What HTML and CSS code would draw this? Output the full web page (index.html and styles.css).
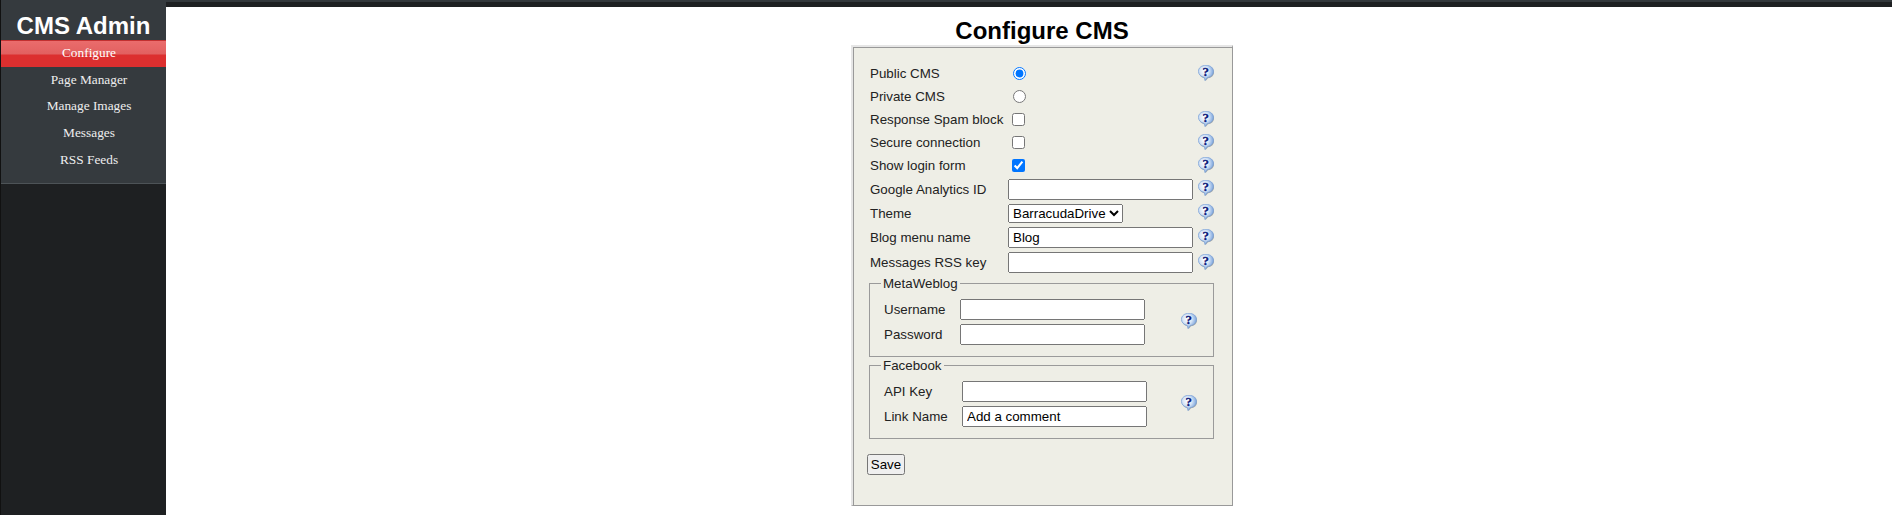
FILE: index.html
```html
<!DOCTYPE html>
<html>

<head>
	<meta charset="utf-8" />
	<title>CMS Admin</title>
	<link rel="stylesheet" href="styles.css">
</head>

<body>
	<svg class="defs" width="0" height="0">
		<defs>
			<radialGradient id="bub" cx="40%" cy="38%" r="65%">
				<stop offset="0" stop-color="#ffffff" />
				<stop offset="0.45" stop-color="#d8e6f7" />
				<stop offset="1" stop-color="#6d9ad8" />
			</radialGradient>
			<symbol id="help" viewBox="0 0 16 16">
				<path d="M8.600 1.300C13 1.300 16 3.900 16 7.200 16 10.500 13.300 12.900 10 13.200L7.500 16 6.900 13.200C3.500 12.600 1.200 10.300 1.200 7.200 1.200 3.900 4.200 1.300 8.600 1.300z" fill="#5d6a78" opacity=".55" />
				<path d="M8 .3C12.400 .3 15.500 2.900 15.500 6.300 15.500 9.700 12.800 12.200 9.300 12.500L7 15.600 6.200 12.400C2.800 11.800 .4 9.400 .4 6.300 .4 2.900 3.600 .3 8 .3z" fill="url(#bub)" stroke="#7ba2d8" stroke-width=".7" />
				<text x="7.800" y="10.600" class="qmark">?</text>
			</symbol>
		</defs>
	</svg>
	<div class="topbar"></div>
	<div class="page">
		<div class="side">
			<div class="menu">
				<h2>CMS Admin</h2>
				<a class="on" href="#">Configure</a>
				<a href="#">Page Manager</a>
				<a href="#">Manage Images</a>
				<a href="#">Messages</a>
				<a href="#">RSS Feeds</a>
			</div>
		</div>
		<div class="main">
			<h1>Configure CMS</h1>
			<form class="cfg">
				<div class="row"><label>Public CMS</label><span><input type="radio" name="pub" checked /></span><svg class="q"><use href="#help" /></svg></div>
				<div class="row"><label>Private CMS</label><span><input type="radio" name="pub" /></span></div>
				<div class="row"><label>Response Spam block</label><span><input type="checkbox" /></span><svg class="q"><use href="#help" /></svg></div>
				<div class="row"><label>Secure connection</label><span><input type="checkbox" /></span><svg class="q"><use href="#help" /></svg></div>
				<div class="row"><label>Show login form</label><span><input type="checkbox" checked /></span><svg class="q"><use href="#help" /></svg></div>
				<div class="row t"><label>Google Analytics ID</label><span><input class="txt" type="text" /></span><svg class="q"><use href="#help" /></svg></div>
				<div class="row t"><label>Theme</label><span><select><option>BarracudaDrive</option></select></span><svg class="q"><use href="#help" /></svg></div>
				<div class="row w"><label>Blog menu name</label><span><input class="txt" type="text" value="Blog" /></span><svg class="q"><use href="#help" /></svg></div>
				<div class="row w"><label>Messages RSS key</label><span><input class="txt" type="text" /></span><svg class="q"><use href="#help" /></svg></div>

				<fieldset class="meta">
					<legend>MetaWeblog</legend>
					<div class="pair">
						<div class="fields">
							<label>Username</label><input class="txt" type="text" />
							<label>Password</label><input class="txt" type="password" />
						</div>
						<svg class="q"><use href="#help" /></svg>
					</div>
				</fieldset>

				<fieldset class="fb">
					<legend>Facebook</legend>
					<div class="pair">
						<div class="fields">
							<label>API Key</label><input class="txt" type="text" />
							<label>Link Name</label><input class="txt" type="text" value="Add a comment" />
						</div>
						<svg class="q"><use href="#help" /></svg>
					</div>
				</fieldset>

				<button type="button">Save</button>
			</form>
		</div>
	</div>
</body>

</html>
```

FILE: styles.css
```css
html, body {
	margin:0;
	height:100%;
	overflow:hidden;
	background-color:#fff;
	font-family:"Liberation Sans", Arial, sans-serif;
	font-size:13.33px;
	color:#222;
}

.defs {
	display:block;
	height:0;
}

.qmark {
	font-family:"Liberation Serif", serif;
	font-weight:bold;
	font-size:13px;
	text-anchor:middle;
	fill:#0c1a78;
	stroke:#0c1a78;
	stroke-width:.3px;
}

.topbar {
	height:7px;
	background:linear-gradient(#33383c 0, #33383c 2px, #1e2022 2px);
}

.page {
	display:flex;
	margin-top:-7px;
	height:515px;
}

.side {
	width:165px;
	flex:none;
	background-color:#1e2022;
	border-left:1px solid #111;
}

.menu {
	height:184px;
	box-sizing:border-box;
	background-color:#353a3e;
	border-bottom:1px solid #4d5357;
}

.menu h2 {
	margin:0;
	padding-top:11px;
	height:29px;
	color:#fff;
	font-size:24px;
	line-height:29px;
	text-align:center;
}

.menu a {
	display:block;
	height:26.6px;
	padding-left:11px;
	line-height:26.6px;
	text-align:center;
	color:#eee;
	font-family:"Liberation Serif", serif;
	font-size:13.33px;
	text-decoration:none;
}

.menu a.on {
	height:26.8px;
	line-height:25px;
	color:#fff;
	background:linear-gradient(#c23030 0, #c23030 1px, #ea6c6c 1px, #e26060 14px, #dc2f2f 15px, #dc2f2f);
}

.main {
	flex:1;
	padding-left:26px;
	min-width:0;
}

h1 {
	margin:0;
	height:31px;
	padding-top:14px;
	font-size:24px;
	line-height:34px;
	text-align:center;
	color:#000;
}

.cfg {
	box-sizing:border-box;
	width:382px;
	height:461px;
	margin:0 auto;
	padding:15px 0 0 17px;
	background-color:#eeeee6;
	border:1px solid #999;
	border-top:2px solid #e6e6e6;
	border-left:2px solid #e6e6e6;
	box-shadow:inset 1px 1px 0 #999;
}

.row {
	display:grid;
	grid-template-columns:138px 190px 16px;
	align-items:center;
	height:23px;
}

.row.t {
	height:24px;
}

.row.w {
	height:25px;
}

.row span {
	display:flex;
	align-items:center;
}

input[type=radio] {
	margin:3px 3px 3px 5px;
}

.q {
	display:block;
	width:16px;
	height:16px;
	margin-top:-2px;
}

.txt {
	box-sizing:border-box;
	width:185px;
	height:21px;
	margin:0;
	padding:1px 3px;
	font-family:"Liberation Sans", Arial, sans-serif;
	font-size:13.33px;
}

select {
	font-family:"Liberation Sans", Arial, sans-serif;
	font-size:13.33px;
}

fieldset {
	box-sizing:border-box;
	width:345px;
	margin:0 0 0 -1px;
	padding:8px 12px 0 14px;
	border:1px solid #9a9a9a;
}

fieldset.meta {
	height:81px;
	margin-top:1px;
}

fieldset.fb {
	height:81px;
	margin-top:1px;
}

legend {
	padding:0 2px;
	margin-left:-3px;
}

.pair {
	display:flex;
	align-items:center;
	justify-content:space-between;
}

.fields {
	display:grid;
	grid-template-columns:76px 185px;
	grid-auto-rows:21px;
	row-gap:4px;
	align-items:center;
}

.fb .fields {
	grid-template-columns:78px 185px;
}

.pair .q {
	margin:0 4px 2px 0;
}

button {
	display:block;
	box-sizing:border-box;
	width:38px;
	height:21px;
	margin:15px 0 0 -3px;
	padding:0;
	font-family:"Liberation Sans", Arial, sans-serif;
	font-size:13.33px;
}
```
